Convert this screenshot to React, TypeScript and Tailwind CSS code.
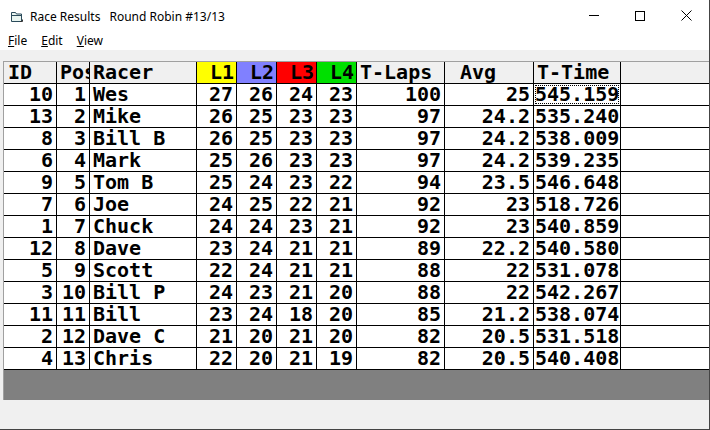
import React from "react";

type Row = [number, number, string, number, number, number, number, number, string, string];

const rows: Row[] = [
  [10, 1, "Wes", 27, 26, 24, 23, 100, "25", "545.159"],
  [13, 2, "Mike", 26, 25, 23, 23, 97, "24.2", "535.240"],
  [8, 3, "Bill B", 26, 25, 23, 23, 97, "24.2", "538.009"],
  [6, 4, "Mark", 25, 26, 23, 23, 97, "24.2", "539.235"],
  [9, 5, "Tom B", 25, 24, 23, 22, 94, "23.5", "546.648"],
  [7, 6, "Joe", 24, 25, 22, 21, 92, "23", "518.726"],
  [1, 7, "Chuck", 24, 24, 23, 21, 92, "23", "540.859"],
  [12, 8, "Dave", 23, 24, 21, 21, 89, "22.2", "540.580"],
  [5, 9, "Scott", 22, 24, 21, 21, 88, "22", "531.078"],
  [3, 10, "Bill P", 24, 23, 21, 20, 88, "22", "542.267"],
  [11, 11, "Bill", 23, 24, 18, 20, 85, "21.2", "538.074"],
  [2, 12, "Dave C", 21, 20, 21, 20, 82, "20.5", "531.518"],
  [4, 13, "Chris", 22, 20, 21, 19, 82, "20.5", "540.408"],
];

const cols = "grid-cols-[53px_33px_107px_40px_40px_40px_40px_88px_89px_87px_1fr]";
const cell = "h-[22px] border-r border-b border-black whitespace-pre leading-[21px]";

const Header = () => (
  <div className={`grid ${cols} text-black`}>
    <div className={`${cell} bg-[#f0f0f0] pl-[4px]`}>ID</div>
    <div className={`${cell} bg-[#f0f0f0] pl-[3px] overflow-hidden`}>Pos</div>
    <div className={`${cell} bg-[#f0f0f0] pl-[3px]`}>Racer</div>
    <div className={`${cell} bg-[#ffff00] text-right pr-[2px]`}>L1</div>
    <div className={`${cell} bg-[#8080ff] text-right pr-[2px]`}>L2</div>
    <div className={`${cell} bg-[#ff0000] text-right pr-[2px]`}>L3</div>
    <div className={`${cell} bg-[#00e000] text-right pr-[2px]`}>L4</div>
    <div className={`${cell} bg-[#f0f0f0] pl-[3px]`}>T-Laps</div>
    <div className={`${cell} bg-[#f0f0f0] pl-[3px]`}> Avg</div>
    <div className={`${cell} bg-[#f0f0f0] pl-[3px]`}>T-Time</div>
    <div className={`${cell} bg-[#f0f0f0] border-r-0`}></div>
  </div>
);

const DataRow = ({ r, first }: { r: Row; first: boolean }) => (
  <div className={`grid ${cols} bg-white text-black`}>
    <div className={`${cell} text-right pr-[3px]`}>{r[0]}</div>
    <div className={`${cell} text-right pr-[3px]`}>{r[1]}</div>
    <div className={`${cell} pl-[3px]`}>{r[2]}</div>
    <div className={`${cell} text-right pr-[3px]`}>{r[3]}</div>
    <div className={`${cell} text-right pr-[3px]`}>{r[4]}</div>
    <div className={`${cell} text-right pr-[3px]`}>{r[5]}</div>
    <div className={`${cell} text-right pr-[3px]`}>{r[6]}</div>
    <div className={`${cell} text-right pr-[3px]`}>{r[7]}</div>
    <div className={`${cell} text-right pr-[3px]`}>{r[8]}</div>
    <div className={`${cell} p-[1px]`}>
      <div className={`h-full leading-[19px] ${first ? "outline outline-1 outline-dotted outline-black -outline-offset-1" : ""}`}>
        {r[9]}
      </div>
    </div>
    <div className={`${cell} border-r-0`}></div>
  </div>
);

export default function App() {
  return (
    <div className="w-[710px] h-[430px] bg-white flex flex-col border-r border-b border-[#444] overflow-hidden font-['Segoe_UI','Noto_Sans',sans-serif]">
      {/* title bar */}
      <div className="h-[31px] pt-[2px] flex items-center text-[12px] text-black shrink-0">
        <svg className="ml-[10px] w-[14px] h-[14px]" viewBox="0 0 14 14" fill="none" stroke="#2a4a5a" strokeWidth="1">
          <path d="M1.5 2.5h4l1 1.5h5v7.5h-10z" fill="#e8f4f0" />
          <path d="M1.5 5.5h10" />
          <path d="M10 11.5l2.5 0l0 -2" stroke="#333" />
        </svg>
        <span className="ml-[6px]">Race Results</span>
        <span className="ml-[9px]">Round Robin #13/13</span>
        <div className="ml-auto flex items-center h-full -mt-[2px]">
          <div className="w-[46px] h-full flex items-center justify-center">
            <div className="w-[10px] h-px bg-black" />
          </div>
          <div className="w-[46px] h-full flex items-center justify-center">
            <div className="w-[10px] h-[10px] border border-black" />
          </div>
          <div className="w-[46px] h-full flex items-center justify-center">
            <svg width="11" height="11" viewBox="0 0 11 11" stroke="#000" strokeWidth="1">
              <path d="M0.5 0.5l10 10M10.5 0.5l-10 10" />
            </svg>
          </div>
        </div>
      </div>
      {/* menu */}
      <div className="h-[19px] pt-[1px] flex items-center gap-[14px] pl-[8px] text-[12px] text-black shrink-0">
        <span><u>F</u>ile</span>
        <span><u>E</u>dit</span>
        <span><u>V</u>iew</span>
      </div>
      {/* grid area */}
      <div className="flex-1 bg-[#f0f0f0] pt-[11px] pl-[3px] flex flex-col">
        <div className="h-[339px] border-t border-l border-[#a0a0a0] bg-[#808080] flex flex-col font-['DejaVu_Sans_Mono',monospace] font-bold text-[20px]">
          <Header />
          {rows.map((r, i) => (
            <DataRow key={i} r={r} first={i === 0} />
          ))}
        </div>
      </div>
    </div>
  );
}
